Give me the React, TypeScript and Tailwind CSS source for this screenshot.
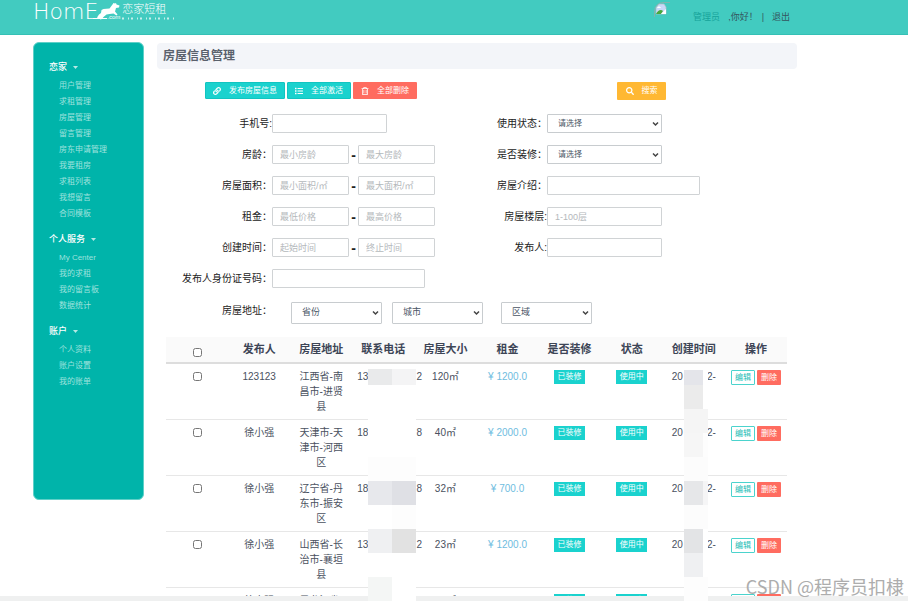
import { useState } from "react";
import clsx from "clsx";
import { FaLink, FaList, FaSearch } from "react-icons/fa";
import { FaRegTrashCan } from "react-icons/fa6";

const menu = [
  {
    title: "恋家",
    items: ["用户管理", "求租管理", "房屋管理", "留言管理", "房东申请管理", "我要租房", "求租列表", "我想留言", "合同模板"],
  },
  { title: "个人服务", items: ["My Center", "我的求租", "我的留言板", "数据统计"] },
  { title: "账户", items: ["个人资料", "账户设置", "我的账单"] },
];

const columns = ["发布人", "房屋地址", "联系电话", "房屋大小", "租金", "是否装修", "状态", "创建时间", "操作"];

const houses = [
  { id: 1, owner: "123123", address: "江西省-南昌市-进贤县", phone: ["13", "2"], size: "120㎡", rent: "1200.0" },
  { id: 2, owner: "徐小强", address: "天津市-天津市-河西区", phone: ["18", "8"], size: "40㎡", rent: "2000.0" },
  { id: 3, owner: "徐小强", address: "辽宁省-丹东市-振安区", phone: ["18", "8"], size: "32㎡", rent: "700.0" },
  { id: 4, owner: "徐小强", address: "山西省-长治市-襄垣县", phone: ["13", "2"], size: "23㎡", rent: "1200.0" },
  { id: 5, owner: "徐小强", address: "黑龙江省-", phone: ["15", "2"], size: "78㎡", rent: "1300.0" },
];

// privacy mosaic: [left cell, right cell], one entry per 24px block
const phoneMosaic = [
  ["bg-white", "bg-white"],
  ["bg-white", "bg-white"],
  ["bg-white", "bg-white"],
  ["bg-[#fdfdfd]", "bg-[#fdfdfd]"],
  ["bg-[#e7e8ec]", "bg-[#dfe0e5]"],
  ["bg-white", "bg-[#fdfdfd]"],
  ["bg-[#eff0f2]", "bg-[#e2e2e2]"],
  ["bg-white", "bg-white"],
  ["bg-[#f4f6f5]", "bg-white"],
];

const dateMosaic = [
  ["bg-[#ebebeb]", "bg-white"],
  ["bg-[#f5f5f5]", "bg-[#f5f5f5]"],
  ["bg-[#f6f6f6]", "bg-[#fdfdfd]"],
  ["bg-[#fcfcfc]", "bg-[#fcfcfc]"],
  ["bg-[#e6e7e9]", "bg-[#f5f5f6]"],
  ["bg-[#fcfcfc]", "bg-[#fcfcfc]"],
  ["bg-[#e3e4e6]", "bg-white"],
  ["bg-[#eff0f2]", "bg-white"],
  ["bg-[#fdfdfd]", "bg-[#fdfdfd]"],
];

const inputClass =
  "h-[19px] shrink-0 rounded-[1px] border border-[#d0d3d5] bg-white px-[7px] text-[9px] text-gray-600 placeholder:text-[#b4b8bb] outline-none";

function Logo() {
  return (
    <a href="#home" className="flex items-start text-white">
      <span className="text-[22px] leading-6 font-extralight font-['DejaVu_Sans']">HomE</span>
      <svg className="-ml-[5px] mt-[2px]" width="28" height="18" viewBox="0 0 28 18" fill="none">
        <path d="M0 16.500h14" stroke="white" />
        <path
          d="M4 15.500l2-3 2-1.500.5-3 2-1 6-.5 3-4 1-1.500 1.500.5 1-.5.5 1.500 3 1-.5 2-3 .5-1 3.500 2.500 3-1 1-3-2-4 .5-3 .5-3 2.500-1.500 2-2 .5.5-1.500-2 .5z"
          fill="white"
        />
      </svg>
      <span className="-ml-[14px] mt-[13px] text-[6px] leading-[8px]">.com</span>
      <span className="ml-[2px] mt-1 flex flex-col gap-[2px]">
        <span className="text-[11px] leading-[11px] font-light">恋家短租</span>
        <svg width="52" height="3" viewBox="0 0 52 3" fill="none">
          <path d="M0 1.500h52" stroke="white" strokeOpacity="0.7" strokeWidth="2" strokeDasharray="2 4 1 2" />
        </svg>
      </span>
    </a>
  );
}

function BrokenImage() {
  return (
    <svg width="17" height="17" viewBox="0 0 17 17" fill="none" role="img" aria-label="头像">
      <path d="M.5 15V9A8.500 8.500 0 0 1 9 .5h7" stroke="#9ba9a8" strokeOpacity="0.7" />
      <path d="M2 12V5.500L5 2h5l2 3v7z" fill="#c8d8f8" stroke="#b5bcc4" strokeWidth=".7" />
      <path d="M3 6c1-2 3-2 4 0z" fill="white" />
      <path d="M2 12c2-4 5-5 7-3l-2 3z" fill="#48a83c" />
      <path d="M7 12l5-5v5z" fill="white" />
    </svg>
  );
}

function Sidebar() {
  return (
    <aside className="h-[458px] w-[111px] shrink-0 rounded-md border border-[#5fd0c8] bg-[#00b4aa] pl-[15px] pt-4">
      {menu.map((group) => (
        <nav key={group.title} className="mb-[9px]">
          <button className="flex h-[17px] items-center gap-[6px] text-[9px] font-medium text-white">
            {group.title}
            <svg width="5" height="3" viewBox="0 0 5 3">
              <path d="M0 0h5L2.500 3z" fill="#b6e9e5" />
            </svg>
          </button>
          <ul className="pl-[10px] pt-[2px]">
            {group.items.map((item) => (
              <li key={item} className="flex h-4 items-center">
                <a href="#menu" className="text-[8px] leading-4 text-[#9fe2dd] hover:text-white">
                  {item}
                </a>
              </li>
            ))}
          </ul>
        </nav>
      ))}
    </aside>
  );
}

function Label({ htmlFor, text }: { htmlFor: string; text: string }) {
  return (
    <label htmlFor={htmlFor} className="w-[115px] shrink-0 text-right">
      {text}
    </label>
  );
}

function TextField({ id, label, placeholder, wide }: { id: string; label: string; placeholder?: string; wide?: boolean }) {
  return (
    <div className="flex items-center">
      <Label htmlFor={id} text={label} />
      <input id={id} placeholder={placeholder} className={clsx(inputClass, wide ? "w-[153px]" : "w-[115px]")} />
    </div>
  );
}

function RangeField({ id, label, from, to }: { id: string; label: string; from: string; to: string }) {
  return (
    <div className="flex items-center">
      <Label htmlFor={id} text={label} />
      <input id={id} placeholder={from} className={clsx(inputClass, "w-[77px]")} />
      <b className="w-[9px] shrink-0 text-center text-[14px] leading-4">-</b>
      <input aria-label={to} placeholder={to} className={clsx(inputClass, "w-[77px]")} />
    </div>
  );
}

function SelectArrow() {
  return (
    <svg
      className="pointer-events-none absolute right-[3px] top-1/2 -translate-y-1/2"
      width="7"
      height="5"
      viewBox="0 0 7 5"
      fill="none"
    >
      <path d="M1 1l2.500 2.500L6 1" stroke="#444" strokeWidth="1.500" />
    </svg>
  );
}

function SelectField({ id, label }: { id: string; label: string }) {
  return (
    <div className="flex items-center">
      <Label htmlFor={id} text={label} />
      <span className="relative flex">
        <select
          id={id}
          className="h-[19px] w-[115px] appearance-none rounded-[1px] border border-[#c8cccf] bg-white pl-[10px] text-[8px] text-gray-600"
        >
          <option>请选择</option>
        </select>
        <SelectArrow />
      </span>
    </div>
  );
}

function RegionSelect({ label }: { label: string }) {
  return (
    <span className="relative flex">
      <select
        aria-label={label}
        className="h-[22px] w-[91px] appearance-none rounded-[1px] border border-[#c8cccf] bg-white pl-[10px] text-[9px] text-gray-600"
      >
        <option>{label}</option>
      </select>
      <SelectArrow />
    </span>
  );
}

function SearchForm() {
  return (
    <form onSubmit={(e) => e.preventDefault()} className="text-[10px] text-[#222]">
      <div className="flex items-start gap-[2px] pl-12 text-[8px] text-white">
        <button className="flex h-[17px] w-20 items-center justify-center gap-2 rounded-[1px] border border-[#12c4c0] bg-[#1ad2ce]">
          <FaLink size={8} />
          发布房屋信息
        </button>
        <button className="flex h-[17px] w-16 items-center justify-center gap-2 rounded-[1px] border border-[#12c4c0] bg-[#1ad2ce]">
          <FaList size={8} />
          全部激活
        </button>
        <button className="flex h-[17px] w-16 items-center justify-center gap-2 rounded-[1px] bg-[#ff6c60]">
          <FaRegTrashCan size={8} />
          全部删除
        </button>
        <button className="ml-[198px] flex h-[18px] w-[49px] items-center justify-center gap-2 rounded-[1px] bg-[#ffb833]">
          <FaSearch size={8} />
          搜索
        </button>
      </div>

      <div className="grid grid-cols-[275px_1fr] gap-y-3 pt-[14px]">
        <TextField id="phone" label="手机号:" />
        <SelectField id="state" label="使用状态：" />
        <RangeField id="age" label="房龄：" from="最小房龄" to="最大房龄" />
        <SelectField id="decorated" label="是否装修：" />
        <RangeField id="area" label="房屋面积：" from="最小面积/㎡" to="最大面积/㎡" />
        <TextField id="intro" label="房屋介绍：" wide />
        <RangeField id="rent" label="租金：" from="最低价格" to="最高价格" />
        <TextField id="floor" label="房屋楼层:" placeholder="1-100层" />
        <RangeField id="created" label="创建时间：" from="起始时间" to="终止时间" />
        <TextField id="owner" label="发布人:" />
        <TextField id="idcard" label="发布人身份证号码：" wide />
      </div>

      <div className="mt-[14px] flex">
        <span className="w-[115px] pt-[2px] text-right leading-[14px]">房屋地址：</span>
        <div className="flex gap-[10px] pl-[19px]">
          <RegionSelect label="省份" />
          <RegionSelect label="城市" />
        </div>
        <div className="pl-[18px]">
          <RegionSelect label="区域" />
        </div>
      </div>
    </form>
  );
}

function HouseTable() {
  const [selected, setSelected] = useState<number[]>([]);
  const allSelected = selected.length === houses.length;

  const toggle = (id: number) => {
    setSelected(selected.includes(id) ? selected.filter((s) => s !== id) : [...selected, id]);
  };

  return (
    <div className="relative ml-[9px] mr-[10px] mt-[13px]">
      <table className="w-full table-fixed text-center text-[10px] leading-[15px] text-[#4a5160]">
        <thead>
          <tr className="h-[26px] border-b-2 border-[#dddddd] bg-[#fafafa] text-[#3d4556]">
            <th className="pt-[6px]">
              <input
                type="checkbox"
                aria-label="全选"
                className="mx-auto block size-[9px]"
                checked={allSelected}
                onChange={() => setSelected(allSelected ? [] : houses.map((h) => h.id))}
              />
            </th>
            {columns.map((column) => (
              <th key={column} className="pb-px text-[11px] font-bold">
                {column}
              </th>
            ))}
          </tr>
        </thead>
        <tbody>
          {houses.map((house) => (
            <tr key={house.id} className="h-14 border-b border-[#e7e7e7] align-top">
              <td className="pt-2">
                <input
                  type="checkbox"
                  aria-label={house.owner}
                  className="mx-auto block size-[9px]"
                  checked={selected.includes(house.id)}
                  onChange={() => toggle(house.id)}
                />
              </td>
              <td className="p-[5px]">{house.owner}</td>
              <td className="px-2 py-[5px]">{house.address}</td>
              <td className="p-[5px]">
                <span className="flex">
                  {house.phone[0]}
                  <span className="w-12 shrink-0" />
                  {house.phone[1]}
                </span>
              </td>
              <td className="p-[5px]">{house.size}</td>
              <td className="p-[5px] text-[#6fbde0]">¥ {house.rent}</td>
              <td className="pt-[6px]">
                <span className="mx-auto block w-[31px] bg-[#1ad2ce] text-[8px] leading-[14px] text-white">已装修</span>
              </td>
              <td className="pt-[6px]">
                <span className="mx-auto block w-[31px] bg-[#1ad2ce] text-[8px] leading-[14px] text-white">使用中</span>
              </td>
              <td className="py-[5px]">
                <span className="flex justify-center">
                  20
                  <span className="w-6 shrink-0" />
                  2-
                </span>
              </td>
              <td className="pt-[6px]">
                <div className="flex justify-center gap-[2px] text-[8px]">
                  <button className="h-[15px] w-6 rounded-[1px] border border-[#4bd3cd] leading-[13px] text-[#1fbdb6]">编辑</button>
                  <button className="h-[15px] w-6 rounded-[1px] bg-[#ff6c60] leading-[15px] text-white">删除</button>
                </div>
              </td>
            </tr>
          ))}
        </tbody>
      </table>

      <div className="absolute left-[202px] top-8 z-20 w-12">
        <div className="flex h-4">
          <span className="flex-1 bg-[#e9eaeb]" />
          <span className="flex-1 bg-[#f4f4f5]" />
        </div>
        {phoneMosaic.map(([left, right], i) => (
          <div key={i} className="flex h-6">
            <span className={clsx("flex-1", left)} />
            <span className={clsx("flex-1", right)} />
          </div>
        ))}
      </div>
      <div className="absolute left-[518px] top-[33px] z-20 w-6">
        <div className="flex h-[15px]">
          <span className="w-[19px] bg-[#e4e5ea]" />
          <span className="flex-1 bg-white" />
        </div>
        {dateMosaic.map(([left, right], i) => (
          <div key={i} className="flex h-6">
            <span className={clsx("w-[19px]", left)} />
            <span className={clsx("flex-1", right)} />
          </div>
        ))}
      </div>
    </div>
  );
}

export default function App() {
  return (
    <div className="relative h-screen overflow-hidden bg-white font-['Liberation_Sans','Noto_Sans_CJK_SC',sans-serif]">
      <header className="flex h-[35px] items-start justify-between border-b border-[#35c0b5] bg-[#42cbc0] pl-[33px] pr-[118px]">
        <Logo />
        <div className="flex items-start text-[9px] leading-[34px] text-[#34565f]">
          <span className="mr-[22px] pt-[2px]">
            <BrokenImage />
          </span>
          <a href="#profile" className="mr-2 text-[#16a39a]">
            管理员
          </a>
          <span className="mr-1">,你好！</span>
          <span className="mr-2">|</span>
          <a href="#logout">退出</a>
        </div>
      </header>

      <div className="flex items-start gap-[13px] pl-[33px] pr-[111px] pt-[7px]">
        <Sidebar />
        <main className="min-w-0 flex-1 pt-px">
          <h1 className="mb-[13px] rounded bg-[#f3f5f9] pl-[6px] text-[12px] leading-[26px] font-bold text-[#5a616c]">
            房屋信息管理
          </h1>
          <SearchForm />
          <HouseTable />
        </main>
      </div>

      <footer className="absolute inset-x-0 bottom-0 z-10 h-[5px] bg-[#eff0f0]" />
      <div className="absolute bottom-[3px] right-1 z-30 text-[18px] leading-6 text-[#adadad] font-['Noto_Sans_CJK_SC']">
        CSDN @程序员扣棣
      </div>
    </div>
  );
}
